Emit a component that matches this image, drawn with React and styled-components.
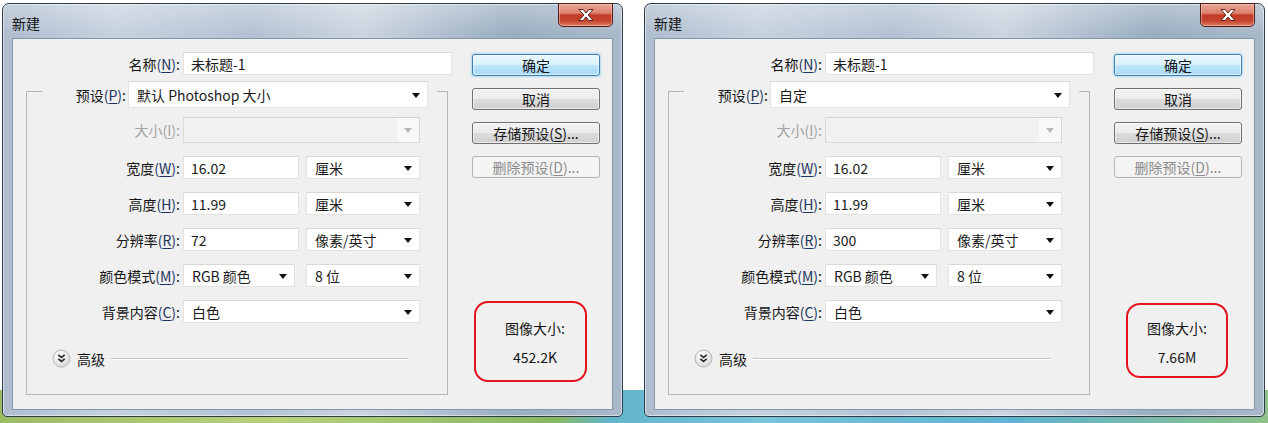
import React from "react";
import styled, { createGlobalStyle } from "styled-components";

const GlobalStyle = createGlobalStyle`
  html, body { margin: 0; padding: 0; background: #ffffff; }
  body {
    font-family: "Noto Sans CJK SC", "Noto Sans", sans-serif;
    font-size: 14px;
    color: #1a1a1a;
  }
  * { box-sizing: border-box; }
`;

const Desktop = styled.div`
  width: 1268px;
  height: 423px;
  overflow: hidden;
  display: flex;
  gap: 21px;
  padding: 3px 0 0 2px;
  background:
    linear-gradient(to right, #9cbc63 0%, #b8d27a 22%, #86b763 44%, #63b6cc 48%, #76c4d8 60%, #5fb4cf 80%, #8fc08a 100%) bottom / 100% 33px no-repeat,
    #ffffff;
`;

const Window = styled.section`
  width: 621px;
  height: 414px;
  display: flex;
  flex-direction: column;
  padding: 0 9px 6px 9px;
  border: 1px solid #2e3b48;
  border-radius: 7px 7px 5px 5px;
  background:
    linear-gradient(to bottom, rgba(255, 255, 255, 0.3), rgba(255, 255, 255, 0) 30px),
    linear-gradient(to right, #aebdce 0%, #c6d2df 18%, #b3c2d2 40%, #cbd5e0 58%, #9aadc1 82%, #a9b9ca 100%);
  box-shadow: inset 0 0 0 1px rgba(255, 255, 255, 0.5);
`;

const TitleBar = styled.header`
  height: 34px;
  flex: none;
  display: flex;
  justify-content: space-between;
  align-items: flex-start;
`;

const Title = styled.h1`
  margin: 0;
  padding-top: 10px;
  font-size: 14px;
  font-weight: normal;
  line-height: 18px;
  color: #111;
`;

const CloseButton = styled.button`
  width: 55px;
  height: 24px;
  margin-top: -1px;
  padding: 0;
  border: 1px solid #4f1d18;
  border-radius: 0 0 5px 5px;
  display: flex;
  align-items: center;
  justify-content: center;
  background: linear-gradient(to bottom, #eba798 0%, #dc7f6d 42%, #c43a26 50%, #c4432d 75%, #dc7a5c 100%);
  box-shadow: inset 0 0 0 1px rgba(255, 210, 200, 0.5);
`;

const Client = styled.div`
  flex: 1;
  border: 1px solid #8296ac;
  background: #f0f0f0;
  display: grid;
  grid-template-columns: 439px 128px;
  column-gap: 20px;
  align-content: start;
  padding-top: 13px;
`;

const FormColumn = styled.div`
  display: flex;
  flex-direction: column;
`;

const NameRow = styled.div`
  display: grid;
  grid-template-columns: 167px 269px;
  column-gap: 3px;
  height: 23px;
  align-items: center;
`;

const Label = styled.label`
  text-align: right;
  white-space: nowrap;
  line-height: 20px;
  color: ${(p) => (p.$disabled ? "#a3a3a3" : "#151515")};
  u {
    text-decoration: underline;
    text-underline-offset: 2px;
  }
`;

const Mnemonic = styled.span`
  color: ${(p) => (p.$disabled ? "#a3a3a3" : "#1e3460")};
`;

const TextBox = styled.div`
  width: ${(p) => p.$w}px;
  height: 23px;
  background: #ffffff;
  border: 1px solid #e3e3e3;
  border-top-color: #d8d8d8;
  padding-left: 7px;
  display: flex;
  align-items: center;
  line-height: 20px;
  white-space: nowrap;
`;

const Combo = styled.div`
  width: ${(p) => p.$w}px;
  height: ${(p) => p.$h || 23}px;
  border: 1px solid ${(p) => (p.$disabled ? "#d9d9d9" : "#e3e3e3")};
  border-top-color: ${(p) => (p.$disabled ? "#d2d2d2" : "#d8d8d8")};
  background: ${(p) =>
    p.$disabled
      ? "linear-gradient(to right, #f1f1f1 calc(100% - 22px), #f8f8f8 calc(100% - 22px))"
      : "#ffffff"};
  padding: 0 7px 0 8px;
  display: flex;
  align-items: center;
  justify-content: space-between;
  line-height: 20px;
  white-space: nowrap;
`;

const Arrow = styled.span`
  width: 0;
  height: 0;
  border-left: 4px solid transparent;
  border-right: 4px solid transparent;
  border-top: 5px solid ${(p) => (p.$disabled ? "#b9b9b9" : "#111111")};
  margin-top: 1px;
`;

const GroupBox = styled.fieldset`
  margin: 0 0 0 13px;
  width: 422px;
  min-inline-size: 0;
  padding: 9px 0 26px 0;
  border: 1px solid #b6b6b6;
  display: grid;
  grid-template-columns: 153px 1fr;
  grid-template-rows: 26px repeat(5, 23px) 32px;
  column-gap: 3px;
  row-gap: 13px;
  justify-items: start;
  align-items: center;
  & > label {
    justify-self: end;
  }
`;

const Legend = styled.legend`
  margin-left: 15px;
  padding: 6px 9px 0 0;
`;

const LegendInner = styled.div`
  display: flex;
  align-items: center;
  gap: 2px;
  label {
    width: 84px;
  }
`;

const FieldPair = styled.div`
  display: flex;
  gap: ${(p) => p.$gap || 7}px;
  align-items: center;
`;

const Advanced = styled.div`
  grid-column: 1 / -1;
  justify-self: stretch;
  align-self: end;
  margin-left: 25px;
  margin-right: 39px;
  height: 19px;
  display: flex;
  align-items: center;
`;

const AdvancedText = styled.span`
  margin-left: 6px;
  line-height: 18px;
  color: #151515;
`;

const Rule = styled.div`
  flex: 1;
  margin-left: 6px;
  border-top: 1px solid #c4c4c4;
  border-bottom: 1px solid #ffffff;
`;

const ButtonColumn = styled.div`
  display: flex;
  flex-direction: column;
  gap: 12px;
  padding-top: 2px;
`;

const Button = styled.button`
  height: 22px;
  width: 128px;
  padding: 0;
  font-family: inherit;
  font-size: 14px;
  line-height: 18px;
  border-radius: 3px;
  color: ${(p) => (p.disabled ? "#8c8c8c" : "#151515")};
  border: 1px solid ${(p) => (p.$primary ? "#3c7fb1" : p.disabled ? "#b0b4b8" : "#707070")};
  background: ${(p) =>
    p.$primary
      ? "linear-gradient(to bottom, #eaf6fd 0%, #d9f0fc 48%, #bee6fd 50%, #a7d9f5 100%)"
      : p.disabled
      ? "#f4f4f4"
      : "linear-gradient(to bottom, #f2f2f2 0%, #ebebeb 48%, #dddddd 50%, #cfcfcf 100%)"};
  box-shadow: ${(p) =>
    p.$primary
      ? "inset 0 0 0 1px rgba(255,255,255,0.6), 0 0 2px 1px rgba(120, 200, 240, 0.55)"
      : p.disabled
      ? "none"
      : "inset 0 0 0 1px rgba(255,255,255,0.55)"};
  u {
    text-underline-offset: 2px;
  }
`;

const SizeInfo = styled.div`
  position: relative;
  margin-top: 128px;
  display: flex;
  flex-direction: column;
  align-items: center;
  gap: 9px;
  padding-right: 2px;
  color: #151515;
`;

const InfoLine = styled.div`
  line-height: 20px;
  font-size: 14px;
`;

const Annotation = styled.div`
  position: absolute;
  left: ${(p) => p.$box.l}px;
  right: ${(p) => p.$box.r}px;
  top: ${(p) => p.$box.t}px;
  bottom: ${(p) => p.$box.b}px;
  border: 2px solid #e3141d;
  border-radius: 14px;
  pointer-events: none;
`;

const CloseIcon = () => (
  <svg width="18" height="14" viewBox="0 0 18 14" aria-hidden="true">
    <path
      d="M2 1.5 H6.2 L9 5 L11.8 1.5 H16 L11.2 7 L16 12.5 H11.8 L9 9 L6.2 12.5 H2 L6.8 7 Z"
      fill="#ffffff"
      stroke="#5e241c"
      strokeWidth="1"
      strokeLinejoin="round"
    />
  </svg>
);

const AdvancedIcon = () => (
  <svg width="19" height="19" viewBox="0 0 19 19" aria-hidden="true">
    <defs>
      <radialGradient id="advg" cx="0.4" cy="0.35" r="0.7">
        <stop offset="0" stopColor="#ffffff" />
        <stop offset="1" stopColor="#d8d8d8" />
      </radialGradient>
    </defs>
    <circle cx="9.5" cy="9.5" r="8.5" fill="url(#advg)" stroke="#b4b4b4" />
    <path d="M6.3 5.8 L9.5 8.5 L12.7 5.8 M6.3 9.8 L9.5 12.5 L12.7 9.8" fill="none" stroke="#2a2a2a" strokeWidth="1.7" />
  </svg>
);

const L = ({ text, m, disabled }) => (
  <Label $disabled={disabled}>
    {text}
    <Mnemonic $disabled={disabled}>
      (<u>{m}</u>)
    </Mnemonic>
    :
  </Label>
);

const Select = ({ value, w, h, disabled }) => (
  <Combo $w={w} $h={h} $disabled={disabled}>
    <span>{value}</span>
    <Arrow $disabled={disabled} />
  </Combo>
);

const NewDialog = ({ preset, resolution, size, box }) => (
  <Window>
    <TitleBar>
      <Title>新建</Title>
      <CloseButton aria-label="关闭">
        <CloseIcon />
      </CloseButton>
    </TitleBar>
    <Client>
      <FormColumn>
        <NameRow>
          <L text="名称" m="N" />
          <TextBox $w={269}>未标题-1</TextBox>
        </NameRow>
        <GroupBox>
          <Legend>
            <LegendInner>
              <L text="预设" m="P" />
              <Select value={preset} w={300} h={27} />
            </LegendInner>
          </Legend>
          <L text="大小" m="I" disabled />
          <Select value="" w={237} h={26} disabled />
          <L text="宽度" m="W" />
          <FieldPair>
            <TextBox $w={116}>16.02</TextBox>
            <Select value="厘米" w={114} />
          </FieldPair>
          <L text="高度" m="H" />
          <FieldPair>
            <TextBox $w={116}>11.99</TextBox>
            <Select value="厘米" w={114} />
          </FieldPair>
          <L text="分辨率" m="R" />
          <FieldPair>
            <TextBox $w={116}>{resolution}</TextBox>
            <Select value="像素/英寸" w={114} />
          </FieldPair>
          <L text="颜色模式" m="M" />
          <FieldPair $gap={11}>
            <Select value="RGB 颜色" w={112} />
            <Select value="8 位" w={114} />
          </FieldPair>
          <L text="背景内容" m="C" />
          <Select value="白色" w={237} />
          <Advanced>
            <AdvancedIcon />
            <AdvancedText>高级</AdvancedText>
            <Rule />
          </Advanced>
        </GroupBox>
      </FormColumn>
      <ButtonColumn>
        <Button $primary>确定</Button>
        <Button>取消</Button>
        <Button>
          存储预设(<u>S</u>)...
        </Button>
        <Button disabled>
          删除预设(<u>D</u>)...
        </Button>
        <SizeInfo>
          <InfoLine>图像大小:</InfoLine>
          <InfoLine>{size}</InfoLine>
          <Annotation $box={box} />
        </SizeInfo>
      </ButtonColumn>
    </Client>
  </Window>
);

export default function App() {
  return (
    <>
      <GlobalStyle />
      <Desktop>
        <NewDialog
          preset="默认 Photoshop 大小"
          resolution="72"
          size="452.2K"
          box={{ l: 2, r: 13, t: -17, b: -15 }}
        />
        <NewDialog
          preset="自定"
          resolution="300"
          size="7.66M"
          box={{ l: 12, r: 14, t: -15, b: -11 }}
        />
      </Desktop>
    </>
  );
}
